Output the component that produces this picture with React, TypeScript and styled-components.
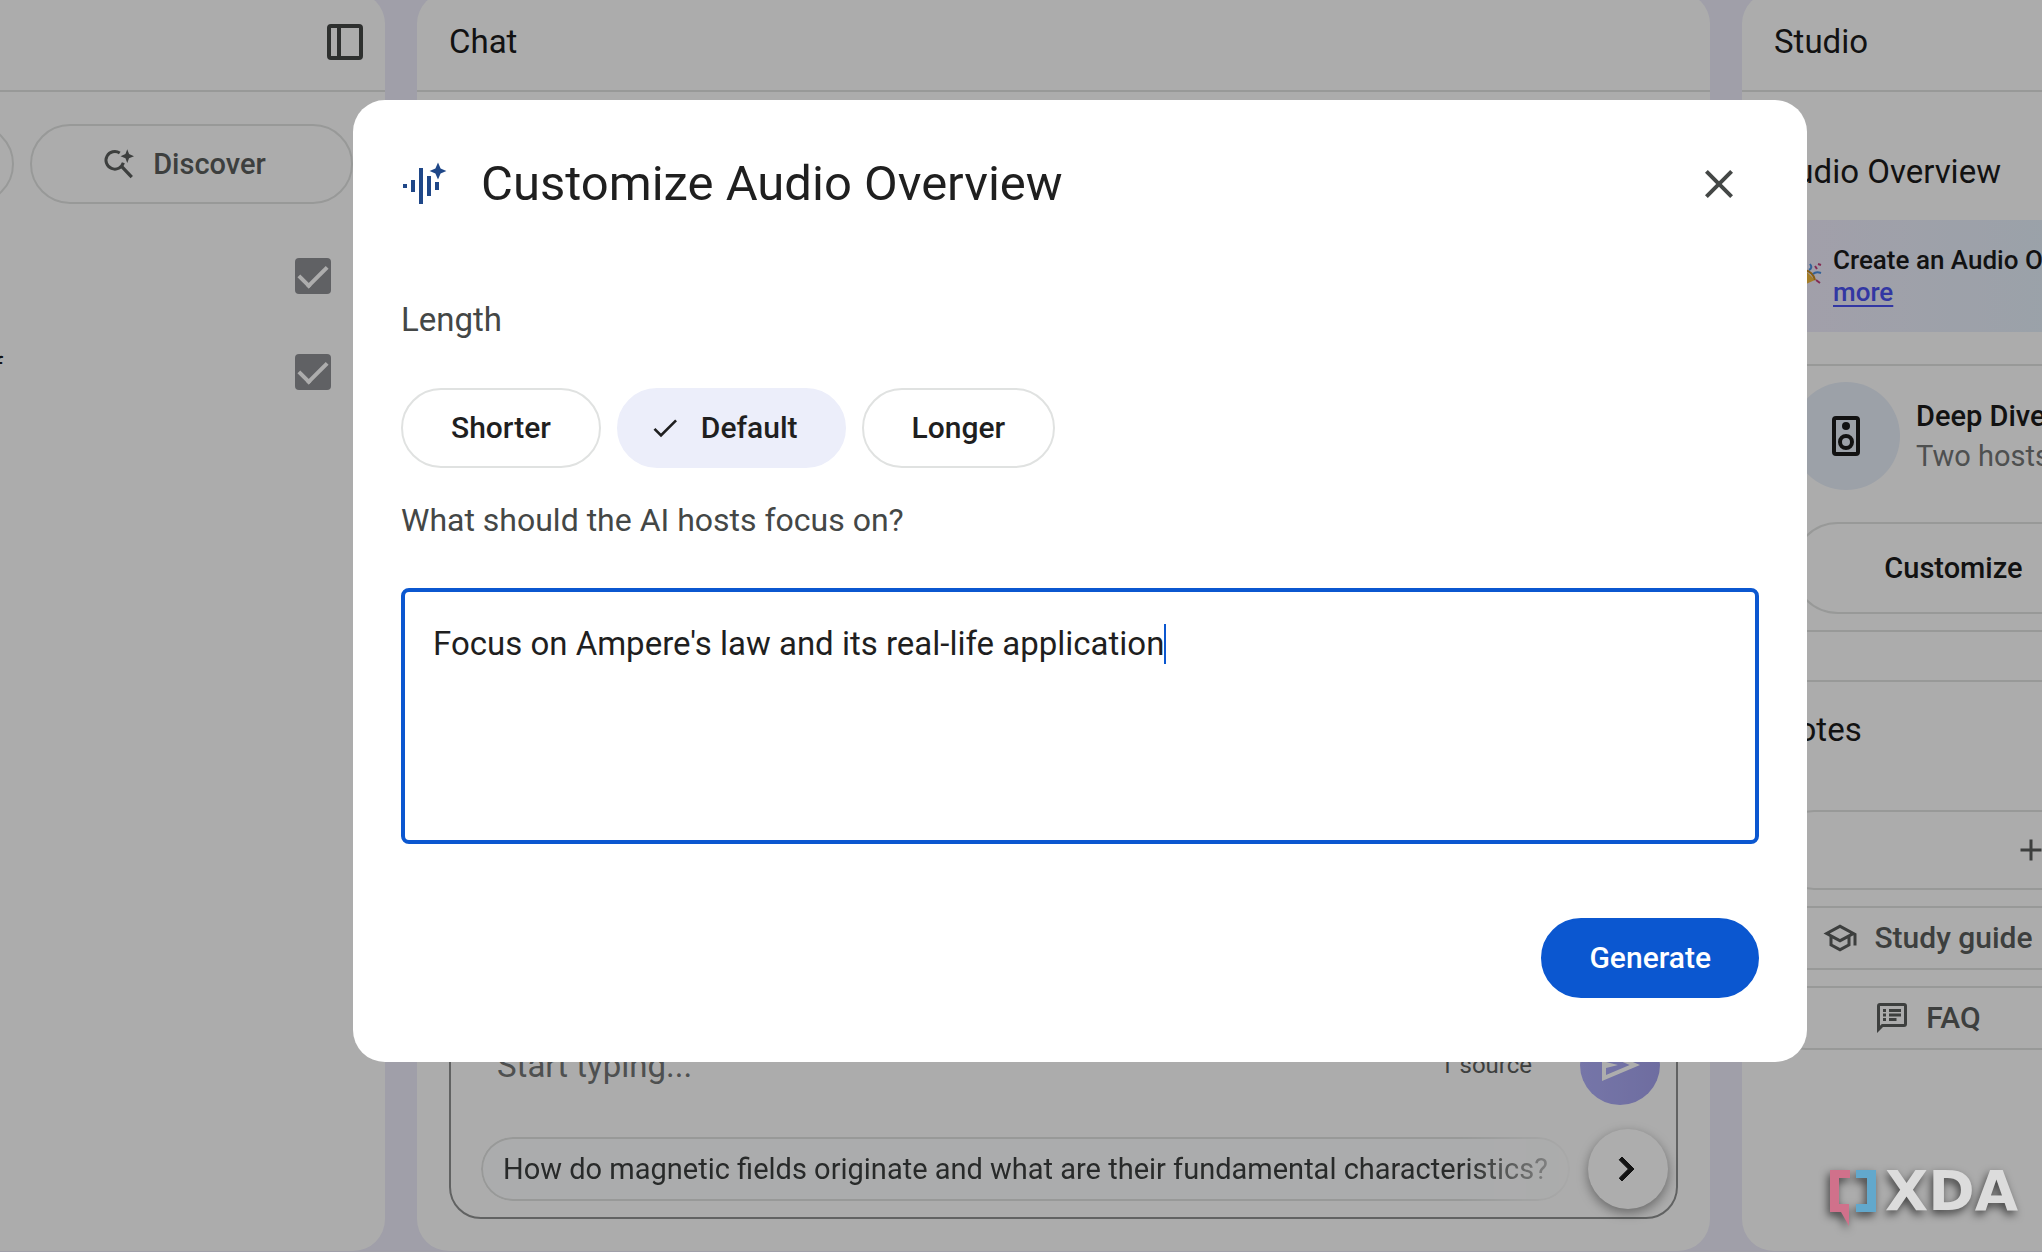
import React, { useLayoutEffect, useRef, useState } from "react";
import styled, { createGlobalStyle, css } from "styled-components";

const GlobalStyle = createGlobalStyle`
  * { box-sizing: border-box; }
  body { margin: 0; overflow: hidden; background: #ecebf9; }
  body, button, input, textarea {
    font-family: "Roboto", "Liberation Sans", sans-serif;
  }
  h1, h2, h3, p { margin: 0; font-weight: inherit; font-size: inherit; }
`;

const ink = "#1b1b1b";
const outline = "#e0e2e1";

const Page = styled.div`
  display: grid;
  grid-template-columns: 385px minmax(0, 1fr) 300px;
  column-gap: 32px;
  height: 100vh;
  padding-bottom: 1px;
  overflow: hidden;
`;

const Panel = styled.section`
  display: flex;
  flex-direction: column;
  margin-top: -8px;
  background: #fefefe;
  border-radius: 32px;
  overflow: hidden;
`;

const LeftPanel = styled(Panel)`
  border-top-left-radius: 0;
  border-bottom-left-radius: 0;
`;

const RightPanel = styled(Panel)`
  border-top-right-radius: 0;
  border-bottom-right-radius: 0;
`;

const PanelHeader = styled.header<{ $end?: boolean }>`
  display: flex;
  align-items: center;
  justify-content: ${(p) => (p.$end ? "flex-end" : "flex-start")};
  flex: none;
  height: 100px;
  padding: 2px ${(p) => (p.$end ? 16 : 32)}px 0;
  border-bottom: 2px solid ${outline};
`;

const Heading = styled.h2`
  font-size: 33px;
  line-height: 40px;
  color: ${ink};
`;

const IconButton = styled.button`
  display: grid;
  place-items: center;
  width: 48px;
  height: 48px;
  padding: 0;
  border: 0;
  background: none;
  color: #444746;
`;

const pill = css`
  display: flex;
  align-items: center;
  justify-content: center;
  flex: none;
  border: 2px solid ${outline};
  border-radius: 48px;
  background: none;
  font-size: 30px;
  line-height: 40px;
  font-weight: 500;
  white-space: nowrap;
`;

const SourceActions = styled.div`
  display: flex;
  justify-content: flex-end;
  gap: 16px;
  padding: 32px 32px 0 0;
`;

const SourceAction = styled.button`
  ${pill}
  gap: 16px;
  width: 323px;
  height: 80px;
  padding: 0 40px 0 24px;
  color: #5a5d5c;
  font-size: 29px;
`;

const SourceList = styled.ul`
  display: flex;
  flex-direction: column;
  margin: 24px 0 0;
  padding: 0;
  list-style: none;
`;

const SourceRow = styled.li`
  display: flex;
  justify-content: flex-end;
  align-items: center;
  height: 96px;
  padding-right: 54px;
`;

const SourceLabel = styled.label`
  display: flex;
  align-items: center;
  flex: none;
  gap: 292px;
  font-size: 28px;
  line-height: 40px;
  color: ${ink};
`;

const SourceName = styled.span`
  padding-bottom: 8px;
`;

const Tick = styled.input`
  appearance: none;
  flex: none;
  width: 36px;
  height: 36px;
  margin: 0;
  border-radius: 4px;
  background: #8e8f94;
  display: grid;
  place-items: center;
  &::after {
    content: "";
    width: 24px;
    height: 12px;
    margin-top: -6px;
    border-left: 4px solid #fff;
    border-bottom: 4px solid #fff;
    transform: rotate(-45deg);
  }
`;

const ChatBody = styled.div`
  display: flex;
  flex: 1;
  flex-direction: column;
  justify-content: flex-end;
  padding: 32px;
`;

const Composer = styled.form`
  display: flex;
  flex-direction: column;
  gap: 24px;
  padding: 32px 8px 8px 30px;
  border: 2px solid #8f9191;
  border-radius: 32px;
`;

const ComposerRow = styled.div`
  display: flex;
  align-items: center;
  padding: 0 8px 0 16px;
`;

const ChatInput = styled.input`
  flex: 1;
  min-width: 0;
  height: 48px;
  padding: 0;
  border: 0;
  outline: 0;
  background: none;
  font-size: 33px;
  color: ${ink};
  &::placeholder { color: #747676; opacity: 1; }
`;

const SourceCount = styled.span`
  margin-right: 48px;
  font-size: 24px;
  line-height: 32px;
  color: #5a5d5c;
`;

const SendButton = styled.button`
  display: grid;
  place-items: center;
  width: 80px;
  height: 80px;
  padding: 0;
  border: 0;
  border-radius: 50%;
  background: linear-gradient(90deg, #aeaef8, #a3a1ec);
  color: #fff;
`;

const Suggestions = styled.div`
  display: flex;
  align-items: center;
  justify-content: space-between;
`;

const Suggestion = styled.button`
  ${pill}
  height: 64px;
  padding: 0 20px;
  background: #fdfeff;
  color: #3c3f3e;
  font-size: 29px;
  font-weight: 400;
  mask-image: linear-gradient(90deg, #000 90%, transparent 102%);
`;

const NextButton = styled.button`
  display: grid;
  place-items: center;
  flex: none;
  width: 80px;
  height: 80px;
  padding: 0;
  border: 0;
  border-radius: 50%;
  background: #fff;
  color: ${ink};
  box-shadow: 0 4px 12px rgba(0, 0, 0, 0.4);
`;

const StudioBody = styled.div`
  display: flex;
  flex-direction: column;
  width: 762px;
`;

const AudioSection = styled.div`
  display: flex;
  flex-direction: column;
  padding: 60px 32px 48px;
  border-bottom: 2px solid ${outline};
`;

const Banner = styled.aside`
  display: flex;
  align-items: center;
  gap: 11px;
  height: 112px;
  margin: 28px 0 32px;
  padding: 0 22px;
  background: linear-gradient(90deg, #efebfb, #e4effa 40%);
  font-size: 26px;
  line-height: 32px;
  font-weight: 500;
  color: ${ink};
`;

const BannerLink = styled.a`
  color: #4a52f0;
  text-underline-offset: 4px;
`;

const Card = styled.article`
  display: flex;
  flex-direction: column;
  gap: 32px;
  padding: 16px;
  border: 2px solid ${outline};
  border-radius: 24px;
`;

const CardTop = styled.div`
  display: flex;
  gap: 16px;
`;

const Avatar = styled.div`
  display: grid;
  place-items: center;
  width: 108px;
  height: 108px;
  border-radius: 50%;
  background: #e6edf8;
  color: ${ink};
`;

const CardText = styled.div`
  display: flex;
  flex-direction: column;
  padding-top: 14px;
  font-size: 29px;
  line-height: 40px;
  color: #747676;
`;

const CardTitle = styled.h3`
  font-weight: 500;
  color: ${ink};
`;

const CustomizeButton = styled.button`
  ${pill}
  width: 323px;
  height: 92px;
  color: ${ink};
  font-size: 29px;
`;

const NotesSection = styled.div`
  display: flex;
  flex-direction: column;
  gap: 16px;
  padding: 28px 32px;
`;

const NotesHeading = styled(Heading)`
  padding-bottom: 44px;
`;

const NoteButton = styled.button<{ $wide?: boolean }>`
  ${pill}
  gap: 16px;
  width: ${(p) => (p.$wide ? 514 : 307)}px;
  height: ${(p) => (p.$wide ? 80 : 64)}px;
  padding: 0;
  color: #5a5d5c;
`;

const Scrim = styled.div`
  position: fixed;
  inset: 0;
  padding: 100px 235px 0 353px;
  background: rgba(0, 0, 0, 0.32);
`;

const Dialog = styled.div`
  display: flex;
  flex-direction: column;
  padding: 48px 48px 64px;
  border-radius: 32px;
  background: #fff;
`;

const DialogHeader = styled.header`
  display: flex;
  align-items: center;
  gap: 32px;
  height: 72px;
  padding-right: 16px;
`;

const DialogTitle = styled.h1`
  flex: 1;
  font-size: 49px;
  line-height: 64px;
  color: #1f1f1f;
`;

const Field = styled.fieldset`
  min-width: 0;
  margin: 80px 0 0;
  padding: 0;
  border: 0;
`;

const legendText = css`
  font-size: 33px;
  line-height: 40px;
  color: #444746;
`;

const Legend = styled.legend`
  ${legendText}
  padding: 0;
`;

const FocusLabel = styled.label`
  ${legendText}
  margin-top: 32px;
  font-size: 32px;
`;

const Chips = styled.div`
  display: flex;
  gap: 16px;
  margin-top: 48px;
`;

const Chip = styled.button<{ $on?: boolean }>`
  ${pill}
  gap: 20px;
  height: 80px;
  padding: 0 ${(p) => (p.$on ? 46 : 48)}px 0 ${(p) => (p.$on ? 30 : 48)}px;
  color: #1f1f1f;
  ${(p) => p.$on && css`
    border-color: #eceefa;
    background: #eceefa;
  `}
`;

const Editor = styled.div`
  position: relative;
  display: flex;
  margin-top: 48px;
`;

const FocusText = styled.textarea`
  width: 100%;
  height: 256px;
  padding: 32px 28px;
  border: 4px solid #0b57d0;
  border-radius: 8px;
  outline: 0;
  resize: none;
  background: #fff;
  font-size: 33px;
  line-height: 40px;
  color: #1f1f1f;
  caret-color: transparent;
`;

const Caret = styled.i`
  position: absolute;
  top: 36px;
  width: 2px;
  height: 40px;
  background: #0b57d0;
`;

const Footer = styled.footer`
  display: flex;
  justify-content: flex-end;
  margin-top: 74px;
`;

const GenerateButton = styled.button`
  ${pill}
  height: 80px;
  padding: 0 46px;
  border-color: #0b57d0;
  background: #0b57d0;
  color: #fff;
`;

const Watermark = styled.div`
  position: fixed;
  right: 24px;
  bottom: 24px;
  display: flex;
  align-items: flex-start;
  gap: 9px;
  filter: drop-shadow(-2px 4px 4px rgba(0, 0, 0, 0.6));
  font-family: "DejaVu Sans", sans-serif;
  font-size: 56px;
  line-height: 42px;
  font-weight: 700;
  color: #dcdcdc;
`;

function Svg({ size, box = "0 0 24 24", children }: { size: number; box?: string; children: React.ReactNode }) {
  return (
    <svg width={size} height={size} viewBox={box} fill="currentColor" aria-hidden="true">
      {children}
    </svg>
  );
}

const focusPrompt = "Focus on Ampere's law and its real-life application";

function FocusEditor() {
  const area = useRef<HTMLTextAreaElement>(null);
  const [text, setText] = useState(focusPrompt);
  const [caretX, setCaretX] = useState(0);

  useLayoutEffect(() => {
    const el = area.current;
    const pen = document.createElement("canvas").getContext("2d");
    if (!el || !pen) return;
    const s = getComputedStyle(el);
    pen.font = `${s.fontWeight} ${s.fontSize} ${s.fontFamily}`;
    setCaretX(32 + Math.round(pen.measureText(text).width));
  }, [text]);

  return (
    <Editor>
      <FocusText id="focus" ref={area} value={text} onChange={(e) => setText(e.target.value)} />
      <Caret style={{ left: caretX }} />
    </Editor>
  );
}

export default function App() {
  return (
    <>
      <GlobalStyle />
      <Page>
        <LeftPanel>
          <PanelHeader $end>
            <IconButton aria-label="Collapse sources">
              <Svg size={48}>
                <path fillRule="evenodd" d="M5 3h14a2 2 0 0 1 2 2v14a2 2 0 0 1-2 2H5a2 2 0 0 1-2-2V5a2 2 0 0 1 2-2zm0 2v14h3V5H5zm5 0v14h9V5h-9z" />
              </Svg>
            </IconButton>
          </PanelHeader>
          <SourceActions>
            <SourceAction aria-label="Add source" />
            <SourceAction>
              <Svg size={36}>
                <path d="M12.500 4.600A5.900 5.900 0 1 0 14.900 11.200" fill="none" stroke="currentColor" strokeWidth="2" />
                <path d="M13.400 13.200 20.500 20.800" fill="none" stroke="currentColor" strokeWidth="2.200" />
                <path d="M17.500 2.200l1.200 3.200 3.300 1.400-3.300 1.400-1.200 3.200-1.200-3.200L13 6.800l3.300-1.400z" />
              </Svg>
              Discover
            </SourceAction>
          </SourceActions>
          <SourceList>
            <SourceRow>
              <Tick type="checkbox" defaultChecked aria-label="Select all sources" />
            </SourceRow>
            <SourceRow>
              <SourceLabel>
                <SourceName>f</SourceName>
                <Tick type="checkbox" defaultChecked />
              </SourceLabel>
            </SourceRow>
          </SourceList>
        </LeftPanel>

        <Panel>
          <PanelHeader>
            <Heading>Chat</Heading>
          </PanelHeader>
          <ChatBody>
            <Composer>
              <ComposerRow>
                <ChatInput aria-label="Message" placeholder="Start typing..." />
                <SourceCount>1 source</SourceCount>
                <SendButton type="button" aria-label="Send">
                  <Svg size={48}>
                    <path d="M3 20V4l19 8L3 20zm2-3 11.850-5L5 7v3.500L11 12l-6 1.500V17z" />
                  </Svg>
                </SendButton>
              </ComposerRow>
              <Suggestions>
                <Suggestion type="button">
                  How do magnetic fields originate and what are their fundamental characteristics?
                </Suggestion>
                <NextButton type="button" aria-label="Next suggestions">
                  <Svg size={48}>
                    <path d="M7.600 7.400 9 6l6 6-6 6-1.400-1.400 4.600-4.600z" stroke="currentColor" strokeWidth="0.500" />
                  </Svg>
                </NextButton>
              </Suggestions>
            </Composer>
          </ChatBody>
        </Panel>

        <RightPanel>
          <PanelHeader>
            <Heading>Studio</Heading>
          </PanelHeader>
          <StudioBody>
            <AudioSection>
              <Heading>Audio Overview</Heading>
              <Banner>
                <Svg size={26} box="0 0 26 26">
                  <path d="M1 25 9 7l10 10z" fill="#f2b93b" />
                  <path d="M9 7q8 2 10 10" fill="none" stroke="#c98a1c" strokeWidth="2" />
                  <path d="M13 7q4-2 1-6M17 11q3-3 8-1" fill="none" stroke="#4a8fe0" strokeWidth="2" />
                  <path d="M19 3l2 3M22 1l3 1M20 17l4 3" stroke="#c2407a" strokeWidth="2" />
                </Svg>
                <p>
                  Create an Audio Overview in more languages! Learn
                  <br />
                  <BannerLink href="#more">more</BannerLink>
                </p>
              </Banner>
              <Card>
                <CardTop>
                  <Avatar>
                    <Svg size={48}>
                      <path fillRule="evenodd" d="M7 2h10a2 2 0 0 1 2 2v16a2 2 0 0 1-2 2H7a2 2 0 0 1-2-2V4a2 2 0 0 1 2-2zm0 2v16h10V4H7z" />
                      <circle cx="12" cy="7" r="2" />
                      <circle cx="12" cy="15" r="3" fill="none" stroke="currentColor" strokeWidth="2" />
                    </Svg>
                  </Avatar>
                  <CardText>
                    <CardTitle>Deep Dive conversation</CardTitle>
                    <p>Two hosts</p>
                  </CardText>
                </CardTop>
                <CustomizeButton>Customize</CustomizeButton>
              </Card>
            </AudioSection>
            <NotesSection>
              <NotesHeading>Notes</NotesHeading>
              <NoteButton $wide aria-label="Add note">
                <Svg size={36}>
                  <path d="M11 5h2v6h6v2h-6v6h-2v-6H5v-2h6z" />
                </Svg>
              </NoteButton>
              <NoteButton>
                <Svg size={36}>
                  <path fillRule="evenodd" d="M12 3 1 9l4 2.180v6L12 21l7-3.820v-6l2-1.090V17h2V9L12 3zm6.820 6L12 12.720 5.180 9 12 5.280 18.820 9zM17 15.990l-5 2.730-5-2.730v-3.720L12 15l5-2.730v3.720z" />
                </Svg>
                Study guide
              </NoteButton>
              <NoteButton>
                <Svg size={36}>
                  <path fillRule="evenodd" d="M4 2h16a2 2 0 0 1 2 2v12a2 2 0 0 1-2 2H6l-4 4V4a2 2 0 0 1 2-2zm0 2v13.200L5.200 16H20V4H4z" />
                  <path d="M6 6h2v2H6zM6 9h2v2H6zM6 12h2v2H6zM10 6h8v2h-8zM10 9h8v2h-8zM10 12h5v2h-5z" />
                </Svg>
                FAQ
              </NoteButton>
            </NotesSection>
          </StudioBody>
        </RightPanel>
      </Page>

      <Scrim>
        <Dialog role="dialog" aria-modal="true" aria-labelledby="dialog-title">
          <DialogHeader>
            <Svg size={48}>
              <g fill="#1f4788">
                <path d="M1 12h2v2H1zM5 10h2v6H5zM9 4h2v18H9zM13 8h2v10h-2zM17 11h2v4h-2z" />
                <path d="M18.500 1.300l1.300 2.900 2.900 1.300-2.900 1.300-1.300 2.900-1.300-2.900-2.900-1.300 2.900-1.300z" />
              </g>
            </Svg>
            <DialogTitle id="dialog-title">Customize Audio Overview</DialogTitle>
            <IconButton aria-label="Close">
              <Svg size={48}>
                <path d="M19 6.410 17.590 5 12 10.590 6.410 5 5 6.410 10.590 12 5 17.590 6.410 19 12 13.410 17.590 19 19 17.590 13.410 12z" />
              </Svg>
            </IconButton>
          </DialogHeader>
          <Field>
            <Legend>Length</Legend>
            <Chips>
              <Chip type="button" aria-pressed="false">Shorter</Chip>
              <Chip type="button" aria-pressed="true" $on>
                <Svg size={32}>
                  <path d="M9 16.200 4.800 12l-1.400 1.400L9 19 21 7l-1.400-1.400z" />
                </Svg>
                Default
              </Chip>
              <Chip type="button" aria-pressed="false">Longer</Chip>
            </Chips>
          </Field>
          <FocusLabel htmlFor="focus">What should the AI hosts focus on?</FocusLabel>
          <FocusEditor />
          <Footer>
            <GenerateButton type="button">Generate</GenerateButton>
          </Footer>
        </Dialog>
      </Scrim>

      <Watermark>
        <svg width="46" height="58" viewBox="0 0 46 58" aria-hidden="true">
          <path d="M0 0H20V8H9V34H19V56L11 42H0z" fill="#d0718b" />
          <path d="M26 0H46V42H26V34H37V8H26z" fill="#62a8cc" />
        </svg>
        XDA
      </Watermark>
    </>
  );
}
